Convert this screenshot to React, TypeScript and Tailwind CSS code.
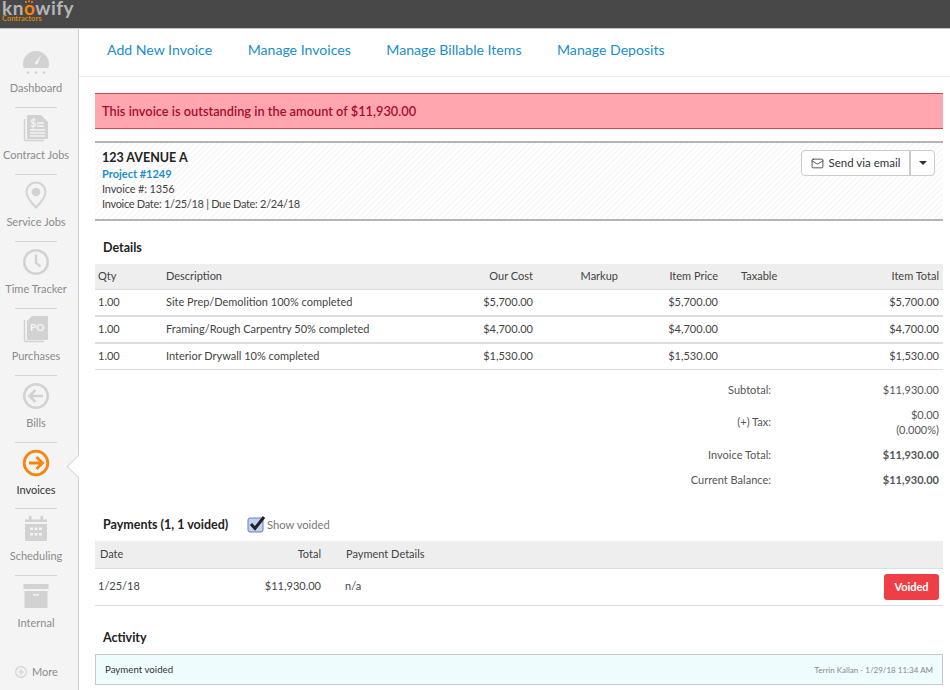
import { ReactNode } from 'react';
import { Mail } from 'lucide-react';

const grey = '#d2d2d2';

const icons: Record<string, ReactNode> = {
  dashboard: (
    <svg width="28" height="28" viewBox="0 0 28 28">
      <path d="M1 17a13 13 0 0 1 26 0c0 1.500-.4 3-1 4H2c-.6-1-1-2.500-1-4z" fill={grey} />
      <path d="M13 15.500l6-7 -3.500 8.500a1.500 1.500 0 0 1-2.500-1.500z" fill="#f4f4f4" />
      <circle cx="6" cy="25.500" r="1.300" fill={grey} />
      <circle cx="14" cy="25.500" r="1.300" fill={grey} />
      <circle cx="22" cy="25.500" r="1.300" fill={grey} />
    </svg>
  ),
  contract: (
    <svg width="26" height="28" viewBox="0 0 26 28">
      <path d="M1.500 5v20.500a1 1 0 0 0 1 1H21" fill="none" stroke={grey} strokeWidth="1.500" />
      <path d="M5 1h13l7 7v16a1 1 0 0 1-1 1H5a1 1 0 0 1-1-1V2a1 1 0 0 1 1-1z" fill={grey} />
      <text x="7" y="13" fontSize="11" fontWeight="700" fill="#f4f4f4" fontFamily="Lato, sans-serif">$</text>
      <path d="M14 9h7M14 12h7M7 16h15M7 19h15M7 22h15" stroke="#f4f4f4" strokeWidth="1.300" />
    </svg>
  ),
  service: (
    <svg width="22" height="28" viewBox="0 0 22 28">
      <path d="M11 1.500a9.500 9.500 0 0 1 9.500 9.500c0 5.500-5.500 11.500-9.500 15.500C7 22.500 1.500 16.500 1.500 11A9.500 9.500 0 0 1 11 1.500z" fill="none" stroke={grey} strokeWidth="2" />
      <circle cx="11" cy="11" r="4.300" fill={grey} />
    </svg>
  ),
  time: (
    <svg width="28" height="28" viewBox="0 0 28 28">
      <circle cx="14" cy="14" r="11.800" fill="none" stroke={grey} strokeWidth="2.500" />
      <path d="M14 6.500V15l4.500 3.500" fill="none" stroke={grey} strokeWidth="2.500" />
    </svg>
  ),
  purchases: (
    <svg width="26" height="28" viewBox="0 0 26 28">
      <path d="M1.500 5v20.500a1 1 0 0 0 1 1H21" fill="none" stroke={grey} strokeWidth="1.500" />
      <path d="M9 1h15a1 1 0 0 1 1 1v22a1 1 0 0 1-1 1H5a1 1 0 0 1-1-1V6z" fill={grey} />
      <text x="7" y="15.500" fontSize="10" fontWeight="900" fill="#f4f4f4" fontFamily="Lato, sans-serif">PO</text>
    </svg>
  ),
  bills: (
    <svg width="28" height="28" viewBox="0 0 28 28">
      <circle cx="14" cy="14" r="11.800" fill="none" stroke={grey} strokeWidth="2.500" />
      <path d="M21 14H8M13.500 8L7.500 14l6 6" fill="none" stroke={grey} strokeWidth="2.500" />
    </svg>
  ),
  invoices: (
    <svg width="28" height="28" viewBox="0 0 28 28">
      <circle cx="14" cy="14" r="11.800" fill="none" stroke="#f7860f" strokeWidth="2.800" />
      <path d="M7 14h13M14.500 8l6 6-6 6" fill="none" stroke="#f7860f" strokeWidth="2.800" />
    </svg>
  ),
  scheduling: (
    <svg width="24" height="28" viewBox="0 0 24 28">
      <path d="M1 4.500h22v2.500H1z" fill={grey} />
      <rect x="5" y="1" width="2.500" height="4" fill={grey} />
      <rect x="16.500" y="1" width="2.500" height="4" fill={grey} />
      <path d="M1 9h22v16a1 1 0 0 1-1 1H2a1 1 0 0 1-1-1z" fill={grey} />
      <path d="M6 12.500h3v2.500H6zM10.500 12.500h3v2.500h-3zM15 12.500h3v2.500h-3zM6 18h3v2.500H6zM10.500 18h3v2.500h-3zM15 18h3v2.500h-3z" fill="#f4f4f4" />
    </svg>
  ),
  internal: (
    <svg width="26" height="26" viewBox="0 0 26 26">
      <rect x="0.500" y="1" width="25" height="5" rx="0.500" fill={grey} />
      <path d="M1.500 8h23v17h-23z" fill={grey} />
      <rect x="10" y="11" width="6" height="1.500" fill="#f4f4f4" />
    </svg>
  ),
};

const navItems = [
  { key: 'dashboard', label: 'Dashboard' },
  { key: 'contract', label: 'Contract Jobs' },
  { key: 'service', label: 'Service Jobs' },
  { key: 'time', label: 'Time Tracker' },
  { key: 'purchases', label: 'Purchases' },
  { key: 'bills', label: 'Bills' },
  { key: 'invoices', label: 'Invoices', active: true },
  { key: 'scheduling', label: 'Scheduling' },
  { key: 'internal', label: 'Internal' },
];

const lineItems = [
  { desc: 'Site Prep/Demolition 100% completed', cost: '$5,700.00' },
  { desc: 'Framing/Rough Carpentry 50% completed', cost: '$4,700.00' },
  { desc: 'Interior Drywall 10% completed', cost: '$1,530.00' },
];

const cols = 'grid grid-cols-[68px_277px_97px_85px_100px_100px_121px]';

function Sidebar() {
  return (
    <aside className="w-[79px] shrink-0 bg-[#f4f4f4] border-r border-[#cfcfcf] flex flex-col items-center relative">
      {navItems.map((item, i) => (
        <div key={item.key} className={`relative w-full flex flex-col items-center pt-[20px] pr-[6px] ${item.active ? 'h-[66px]' : 'h-[67px]'}`}>
          {i > 0 && <div className="absolute top-[11px] left-[15px] w-[42px] h-px bg-[#d4d4d4]" />}
          <div className="h-[28px] flex items-center justify-center mt-[-2px]">{icons[item.key]}</div>
          <div className={`mt-[6px] text-[11px] leading-[14px] whitespace-nowrap ${item.active ? 'text-[#333]' : 'text-[#8b8b8b]'}`}>{item.label}</div>
          {item.active && (
            <div className="absolute right-[-9px] top-[27px] w-[17px] h-[17px] rotate-45 bg-white border-l border-b border-[#d4d4d4]" />
          )}
        </div>
      ))}
      <div className="absolute top-[635px] left-[15px] flex items-center gap-[5px] text-[11px] text-[#8b8b8b]">
        <svg width="12" height="12" viewBox="0 0 12 12">
          <circle cx="6" cy="6" r="5.300" fill="none" stroke={grey} strokeWidth="1.200" />
          <path d="M6 3v6M3 6h6" stroke={grey} strokeWidth="1.200" />
        </svg>
        More
      </div>
    </aside>
  );
}

function TopTabs() {
  return (
    <div className="h-[48px] shrink-0 flex items-center gap-[35.5px] pl-[28px] pb-[6px] border-b border-[#ececec] text-[14.1px] text-[#1b8ecb]">
      <span>Add New Invoice</span>
      <span>Manage Invoices</span>
      <span>Manage Billable Items</span>
      <span>Manage Deposits</span>
    </div>
  );
}

function SummaryRow({ label, children, bold, center, h }: { label: string; children: ReactNode; bold?: boolean; center?: boolean; h: string }) {
  return (
    <div className={`flex text-[11px] text-[#555] ${h}`}>
      <div className={`w-[676px] text-right ${center ? 'pt-[7px]' : ''}`}>{label}</div>
      <div className={`w-[168px] text-right leading-[15px] ${bold ? 'font-bold' : ''}`}>{children}</div>
    </div>
  );
}

export default function App() {
  return (
    <div className="w-[950px] h-[690px] overflow-hidden flex flex-col bg-white font-['Lato',sans-serif]">
      <header className="h-[29px] shrink-0 bg-[#484848] relative overflow-hidden border-b border-[#c4c4c4]">
        <div className="pl-[2px] pt-[1px] text-[19px] leading-[14px] font-bold tracking-[0.5px] text-[#b5b5b5]">
          kn<span className="text-[#f7860f]">o</span>wify
        </div>
        <svg width="10" height="4" viewBox="0 0 10 4" className="absolute left-[24px] top-0">
          <circle cx="2" cy="2" r="1" fill="#f7860f" />
          <circle cx="5" cy="1.300" r="1" fill="#f7860f" />
          <circle cx="8" cy="2" r="1" fill="#f7860f" />
        </svg>
        <div className="pl-[2px] text-[7.500px] leading-[8px] font-bold text-[#d9820f]">Contractors</div>
      </header>
      <div className="flex-1 flex min-h-0">
        <Sidebar />
        <main className="flex-1 min-w-0 overflow-hidden">
          <TopTabs />
          <div className="pl-[16px] pr-[7px] pt-[16px] w-[871px]">
            <div className="h-[36px] bg-[#ffa6ae] border-y border-[#d8434f] flex items-center pl-[7px] pt-[1px] text-[12.800px] font-semibold text-[#a90a2e]">
              This invoice is outstanding in the amount of $11,930.00
            </div>

            <div className="mt-[12px] h-[80px] border-y-2 border-[#b4b4b4] flex justify-between pl-[7px] pr-[8px] pt-[6px] bg-[repeating-linear-gradient(135deg,#ffffff_0px,#ffffff_2px,#f8f8f8_2px,#f8f8f8_4px)]">
              <div className="text-[11px] leading-[15px] text-[#444]">
                <div className="text-[12.500px] font-bold text-[#222] leading-[17px]">123 AVENUE A</div>
                <div className="font-bold text-[#1b8ecb]">Project #1249</div>
                <div className="tracking-[-0.15px]">Invoice #: 1356</div>
                <div className="tracking-[-0.3px]">Invoice Date: 1/25/18 | Due Date: 2/24/18</div>
              </div>
              <div className="flex h-[26px] mt-[1px] border border-[#ccc] rounded-[4px] bg-white text-[11.500px] text-[#333]">
                <div className="w-[109px] flex items-center justify-center gap-[5px] border-r-2 border-[#ccc]">
                  <Mail size={13} strokeWidth={1.500} />
                  Send via email
                </div>
                <div className="w-[23px] flex items-center justify-center">
                  <div className="w-0 h-0 border-x-[4px] border-x-transparent border-t-[4px] border-t-[#333]" />
                </div>
              </div>
            </div>

            <div className="mt-[19px] pl-[8px] text-[12.500px] leading-[16px] font-bold text-[#222]">Details</div>
            <div className="mt-[8px] text-[11px] text-[#444]">
              <div className={`${cols} h-[26px] items-center bg-[#eeeeee] border-b border-[#ddd]`}>
                <div className="pl-[3px]">Qty</div>
                <div className="pl-[3px]">Description</div>
                <div className="text-right pr-[4px]">Our Cost</div>
                <div className="text-right pr-[4px]">Markup</div>
                <div className="text-right pr-[4px]">Item Price</div>
                <div className="pl-[19px]">Taxable</div>
                <div className="text-right pr-[4px]">Item Total</div>
              </div>
              {lineItems.map((row, i) => (
                <div key={row.desc} className={`${cols} items-center border-[#ddd] ${i === 2 ? 'h-[26px] border-b' : 'h-[27px] border-b-2'}`}>
                  <div className="pl-[3px]">1.00</div>
                  <div className="pl-[3px]">{row.desc}</div>
                  <div className="text-right pr-[4px]">{row.cost}</div>
                  <div />
                  <div className="text-right pr-[4px]">{row.cost}</div>
                  <div />
                  <div className="text-right pr-[4px]">{row.cost}</div>
                </div>
              ))}
            </div>

            <div className="mt-[12px]">
              <SummaryRow label="Subtotal:" h="h-[25px]">$11,930.00</SummaryRow>
              <SummaryRow label="(+) Tax:" center h="h-[40px]">$0.00<br />(0.000%)</SummaryRow>
              <SummaryRow label="Invoice Total:" bold h="h-[25px]">$11,930.00</SummaryRow>
              <SummaryRow label="Current Balance:" bold h="h-[25px]">$11,930.00</SummaryRow>
            </div>

            <div className="mt-[17px] mb-[5px] h-[22px] pl-[8px] flex items-center">
              <span className="w-[144px] text-[12.500px] font-bold text-[#222]">Payments (1, 1 voided)</span>
              <svg width="20" height="18" viewBox="0 0 20 18" className="mt-[-3px]">
                <rect x="1" y="3" width="15" height="14" rx="2" fill="#bcd4f2" stroke="#6a78c8" />
                <path d="M4 9l4 4.500L17 2" fill="none" stroke="#222" strokeWidth="3" />
              </svg>
              <span className="text-[11.200px] text-[#777]">Show voided</span>
            </div>
            <div className="text-[11px] text-[#444]">
              <div className="grid grid-cols-[130px_96px_1fr_auto] h-[28px] items-center bg-[#eeeeee] border-b border-[#ddd]">
                <div className="pl-[5px]">Date</div>
                <div className="text-right">Total</div>
                <div className="pl-[25px]">Payment Details</div>
                <div />
              </div>
              <div className="grid grid-cols-[130px_96px_1fr_auto] h-[37px] items-center border-b border-[#ddd]">
                <div className="pl-[3px] pb-[2px]">1/25/18</div>
                <div className="text-right pb-[2px]">$11,930.00</div>
                <div className="pl-[24px] pb-[2px]">n/a</div>
                <div className="mr-[4px] w-[55px] h-[26px] rounded-[3px] bg-[#ee3f46] flex items-center justify-center font-bold text-white">Voided</div>
              </div>
            </div>

            <div className="mt-[24px] pl-[8px] text-[12.500px] leading-[16px] font-bold text-[#222]">Activity</div>
            <div className="mt-[8px] h-[31px] bg-[#effcfd] border border-[#c8c8c8] flex items-center justify-between px-[9px]">
              <span className="text-[9.700px] text-[#333]">Payment voided</span>
              <span className="text-[8px] text-[#888]">Terrin Kallan - 1/29/18 11:34 AM</span>
            </div>
          </div>
        </main>
      </div>
    </div>
  );
}
